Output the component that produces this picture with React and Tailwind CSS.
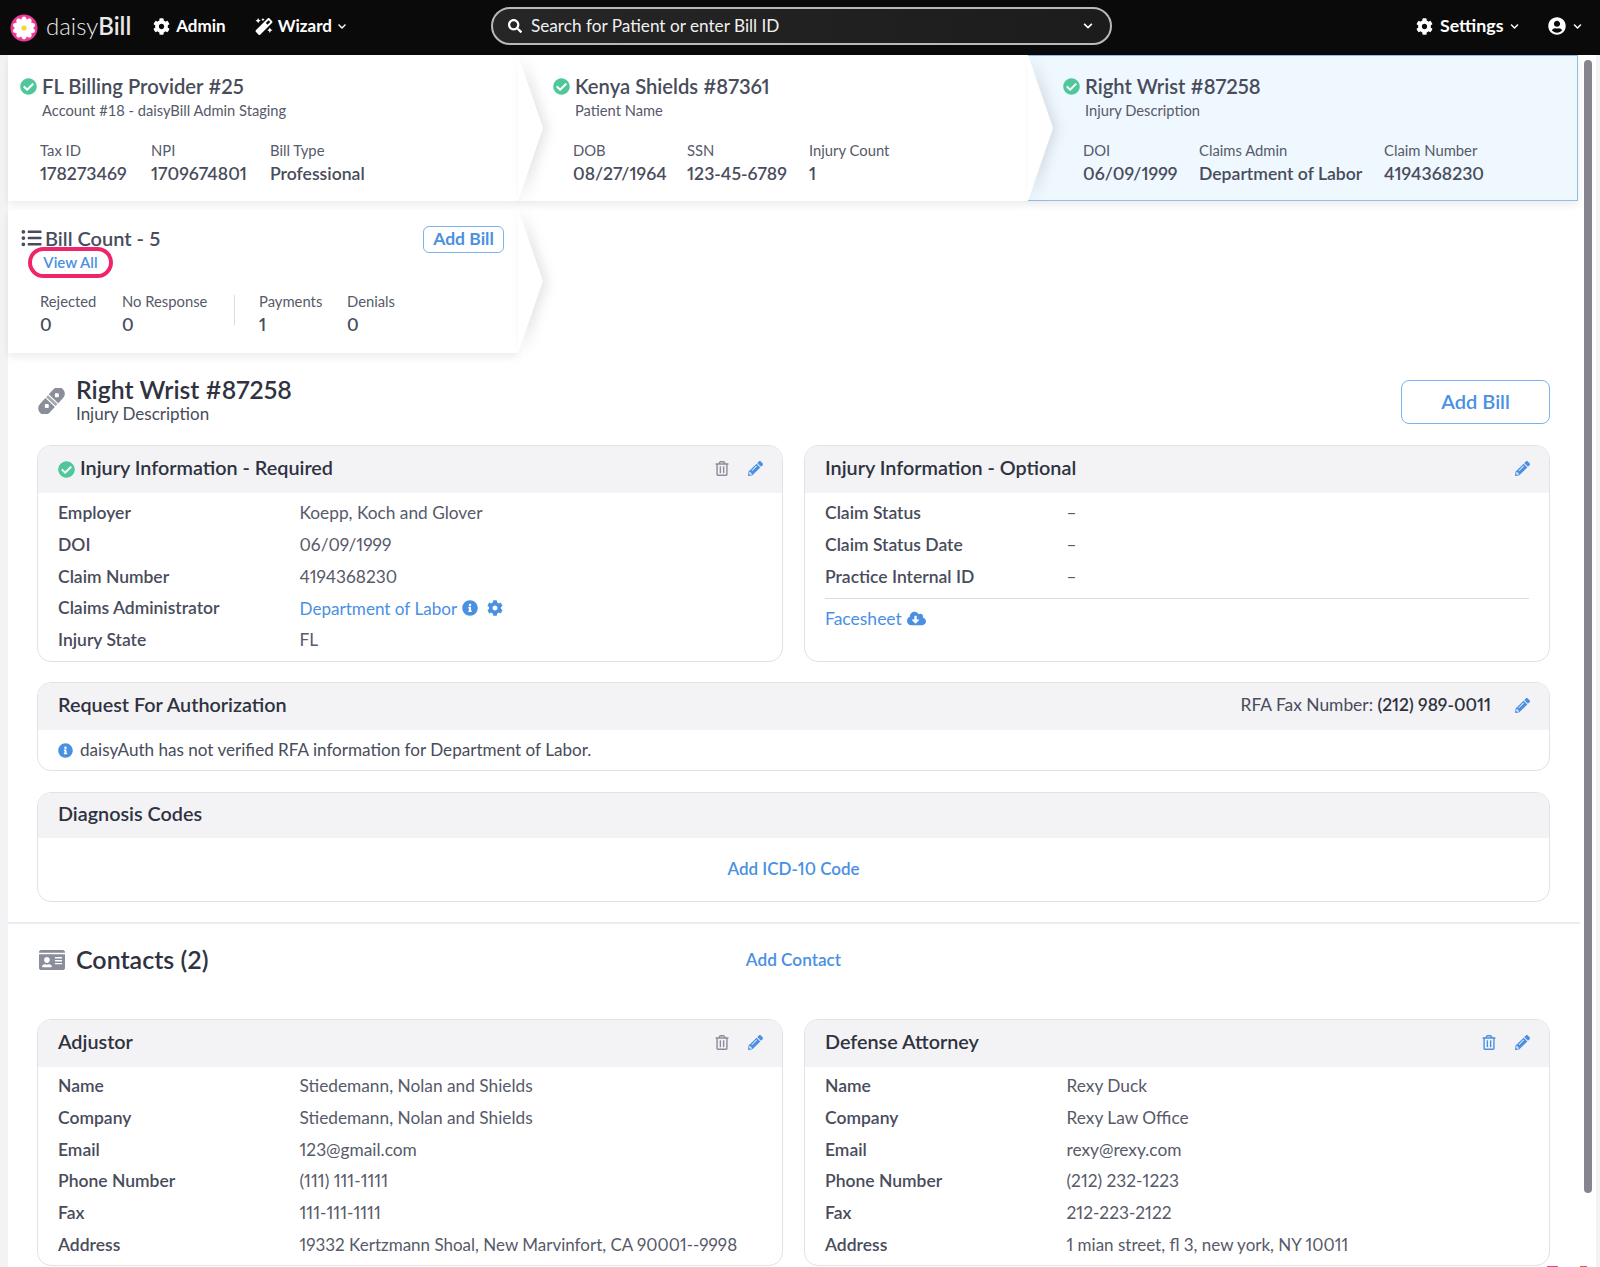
import React from "react";
import {
  FaCheckCircle,
  FaChevronDown,
  FaCloudDownloadAlt,
  FaCog,
  FaIdCard,
  FaInfoCircle,
  FaListUl,
  FaMagic,
  FaPencilAlt,
  FaRegTrashAlt,
  FaSearch,
  FaUserCircle,
} from "react-icons/fa";

const petals = [0, 36, 72, 108, 144, 180, 216, 252, 288, 324];

function Logo() {
  return (
    <svg width="28" height="28" viewBox="0 0 28 28">
      <circle cx="14" cy="14" r="13.5" fill="#ee3a95" />
      {petals.map((a) => (
        <ellipse key={a} cx="14" cy="7.5" rx="3" ry="5" fill="#fff" transform={`rotate(${a} 14 14)`} />
      ))}
      <circle cx="14" cy="14" r="2.6" fill="#f7d530" />
    </svg>
  );
}

function BandAid() {
  return (
    <svg width="27" height="26" viewBox="0 0 27 26" className="ml-[1px] -mt-[3px] shrink-0">
      <g transform="rotate(-47 13.5 13)">
        <path d="M3.5 6.5h8v13h-8a6.5 6.5 0 0 1-6.5-6.5v0a6.5 6.5 0 0 1 6.5-6.5z" fill="#8a8d9a" />
        <rect x="12.6" y="6.5" width="2.8" height="13" fill="#a4a6b0" />
        <path d="M16.5 6.5h7a6.5 6.5 0 0 1 6.5 6.5v0a6.5 6.5 0 0 1-6.5 6.5h-7z" fill="#8a8d9a" />
        <rect x="4.6" y="11" width="4" height="4" rx="1" fill="#fff" transform="rotate(45 6.6 13)" />
        <rect x="19.4" y="11" width="4" height="4" rx="1" fill="#fff" transform="rotate(45 21.4 13)" />
      </g>
    </svg>
  );
}

function Chevron() {
  return (
    <div className="absolute top-0 right-[-25px] h-full w-[25px] [filter:drop-shadow(5px_1px_6px_rgba(0,0,0,0.1))]">
      <div className="h-full w-full bg-white [clip-path:polygon(0_0,100%_50%,0_100%)]"></div>
    </div>
  );
}

function Stat({ label, value, className }) {
  return (
    <div className={className}>
      <div className="text-[14.8px] leading-5 text-[#565a69]">{label}</div>
      <div className="mt-[2px] text-[17.6px] leading-6 font-semibold text-[#484c5b] proportional-nums">{value}</div>
    </div>
  );
}

function Crumb({ title, sub, stats, top, className, chevron }) {
  return (
    <div className={className}>
      <div className={`-ml-[20px] flex items-center ${top}`}>
        <FaCheckCircle className="mr-[5px] h-[17px] w-[17px] text-[#4fc79a]" />
        <span className="text-[20.2px] leading-6 font-semibold text-[#484c5b] proportional-nums">{title}</span>
      </div>
      <div className="mt-[2px] ml-[2px] text-[14.7px] leading-5 text-[#565a69]">{sub}</div>
      <div className="mt-[20px] flex">{stats}</div>
      {chevron && <Chevron />}
    </div>
  );
}

function Row({ label, children, valueClass = "text-[17.3px]" }) {
  return (
    <div className="flex h-[31.7px] items-center text-[17.5px] proportional-nums">
      <div className="w-[241.5px] shrink-0 font-semibold text-[#484c5b]">{label}</div>
      <div className={`flex items-center text-[#565a69] ${valueClass}`}>{children}</div>
    </div>
  );
}

function CardHead({ title, check, trash, trashBlue, children }) {
  return (
    <div className="flex h-[47px] items-center rounded-t-[13px] bg-[#f3f3f6] pr-[19px] pl-[20px]">
      {check && <FaCheckCircle className="mr-[5px] h-[17px] w-[17px] text-[#4fc79a]" />}
      <div className="mb-[3px] flex-1 text-[19.8px] font-semibold text-[#2f3240]">{title}</div>
      {children}
      {trash && (
        <FaRegTrashAlt className={`mr-[19px] mb-[2px] h-[15px] w-[14px] ${trashBlue ? "text-[#4a90e2]" : "text-[#8a8d9a]"}`} />
      )}
      <FaPencilAlt className="mb-[2px] h-[15px] w-[15px] text-[#4a90e2]" />
    </div>
  );
}

function Card({ className, children }) {
  return (
    <div className={`rounded-[14px] border border-[#e2e2e6] bg-white ${className}`}>{children}</div>
  );
}

export default function App() {
  return (
    <div className="relative h-[1267px] w-[1600px] overflow-hidden bg-[#f3f3f6] [font-family:Lato,sans-serif]">
      <header className="flex h-[55px] items-center bg-[#0a0a0a] pb-[3px] text-white">
        <div className="ml-[10px] mt-[3px]">
          <Logo />
        </div>
        <div className="ml-[8px] text-[24px] leading-none text-[#e8e8e8]">
          <span className="font-light">daisy</span>
          <span className="font-semibold">Bill</span>
        </div>
        <FaCog className="ml-[22px] h-[17px] w-[17px]" />
        <span className="ml-[6px] text-[17px] font-bold">Admin</span>
        <FaMagic className="ml-[29px] h-[17px] w-[18px]" />
        <span className="ml-[5px] text-[17px] font-bold">Wizard</span>
        <FaChevronDown className="ml-[4px] h-[9px] w-[12px]" />
        <div className="ml-[143px] flex h-[38px] w-[621px] items-center rounded-full border-2 border-[#b9b9b9] bg-gradient-to-r from-[#262626] to-[#1c1c1c] pr-[16px] pl-[15px]">
          <FaSearch className="h-[14px] w-[14px]" />
          <span className="ml-[9px] flex-1 text-[17.2px] text-[#f0f0f0]">Search for Patient or enter Bill ID</span>
          <FaChevronDown className="h-[10px] w-[12px]" />
        </div>
        <FaCog className="ml-[304px] h-[17px] w-[17px]" />
        <span className="ml-[7px] mb-[1px] text-[17.8px] font-bold">Settings</span>
        <FaChevronDown className="ml-[5px] h-[9px] w-[11px]" />
        <FaUserCircle className="ml-[28px] h-[18px] w-[18px]" />
        <FaChevronDown className="ml-[6px] h-[9px] w-[11px]" />
      </header>

      <main className="mr-[4px] ml-[8px] h-[1212px] bg-white">
        <div className="flex w-[1570px]">
          <Crumb
            className="relative z-20 h-[146px] w-[510px] bg-white pl-[32px] shadow-[0_4px_8px_rgba(0,0,0,0.08)]"
            top="pt-[19px]"
            title="FL Billing Provider #25"
            sub="Account #18 - daisyBill Admin Staging"
            chevron
            stats={
              <>
                <Stat className="w-[111px]" label="Tax ID" value="178273469" />
                <Stat className="w-[119px]" label="NPI" value="1709674801" />
                <Stat label="Bill Type" value="Professional" />
              </>
            }
          />
          <Crumb
            className="relative z-10 h-[146px] w-[510px] bg-white pl-[55px] shadow-[0_4px_8px_rgba(0,0,0,0.08)]"
            top="pt-[19px]"
            title="Kenya Shields #87361"
            sub="Patient Name"
            chevron
            stats={
              <>
                <Stat className="w-[114px]" label="DOB" value="08/27/1964" />
                <Stat className="w-[122px]" label="SSN" value="123-45-6789" />
                <Stat label="Injury Count" value="1" />
              </>
            }
          />
          <Crumb
            className="relative h-[146px] w-[550px] border-t border-r border-b border-[#8fbcf2] bg-[#eff7ff] pl-[55px] shadow-[0_4px_8px_rgba(0,0,0,0.08)]"
            top="pt-[18px]"
            title="Right Wrist #87258"
            sub="Injury Description"
            stats={
              <>
                <Stat className="w-[116px]" label="DOI" value="06/09/1999" />
                <Stat className="w-[185px]" label="Claims Admin" value="Department of Labor" />
                <Stat label="Claim Number" value="4194368230" />
              </>
            }
          />
        </div>

        <div className="relative mt-[8px] h-[144px] w-[510px] bg-white pr-[14px] pl-[32px] shadow-[0_4px_8px_rgba(0,0,0,0.08)]">
          <div className="flex items-start">
            <div>
              <div className="-ml-[19px] flex items-center pt-[17px]">
                <FaListUl className="mr-[3px] h-[20px] w-[21px] text-[#484c5b]" />
                <span className="text-[20px] leading-6 font-semibold text-[#484c5b]">Bill Count - 5</span>
              </div>
              <div className="-ml-[12px] mt-[-3px] flex h-[31px] w-[85px] items-center justify-center rounded-full border-4 border-[#f0246a] text-[15px] font-semibold text-[#4a90e2]">
                View All
              </div>
            </div>
            <div className="mt-[17px] ml-auto flex h-[27px] w-[81px] items-center justify-center rounded-[6px] border border-[#7eb2ee] pb-[1px] text-[17.5px] font-bold text-[#4a90e2]">
              Add Bill
            </div>
          </div>
          <div className="mt-[13px] flex">
            <Stat className="w-[82px]" label="Rejected" value="0" />
            <Stat className="w-[112px]" label="No Response" value="0" />
            <div className="mt-[4px] mr-[24px] h-[30px] w-px bg-[#dcdce0]"></div>
            <Stat className="w-[88px]" label="Payments" value="1" />
            <Stat label="Denials" value="0" />
          </div>
          <Chevron />
        </div>

        <div className="ml-[29px] w-[1513px]">
          <div className="mt-[27px] flex h-[44px] items-center">
            <BandAid />
            <div className="-mt-[4px] ml-[11px]">
              <div className="text-[24.8px] leading-[28px] font-semibold text-[#2f3240] proportional-nums">Right Wrist #87258</div>
              <div className="text-[17px] leading-[20px] text-[#484c5b]">Injury Description</div>
            </div>
            <div className="ml-auto flex h-[44px] w-[149px] items-center justify-center rounded-[8px] border border-[#7eb2ee] pb-[3px] text-[20px] font-semibold text-[#4a90e2]">
              Add Bill
            </div>
          </div>

          <div className="mt-[21px] grid grid-cols-[746px_1fr] gap-[21px]">
            <Card className="h-[217px]">
              <CardHead title="Injury Information - Required" check trash />
              <div className="px-[20px] pt-[4.5px]">
                <Row label="Employer">Koepp, Koch and Glover</Row>
                <Row label="DOI">06/09/1999</Row>
                <Row label="Claim Number">4194368230</Row>
                <Row label="Claims Administrator">
                  <span className="text-[17.1px] text-[#4a90e2]">Department of Labor</span>
                  <FaInfoCircle className="ml-[5px] h-[16px] w-[16px] text-[#4a90e2]" />
                  <FaCog className="ml-[9px] h-[16px] w-[16px] text-[#4a90e2]" />
                </Row>
                <Row label="Injury State">FL</Row>
              </div>
            </Card>
            <Card className="h-[217px]">
              <CardHead title="Injury Information - Optional" />
              <div className="px-[20px] pt-[4.5px]">
                <Row label="Claim Status">–</Row>
                <Row label="Claim Status Date">–</Row>
                <Row label="Practice Internal ID">–</Row>
                <div className="mt-[5px] border-t border-[#dcdce0] pt-[7px]">
                  <div className="flex items-center text-[17.5px] text-[#4a90e2]">
                    Facesheet
                    <FaCloudDownloadAlt className="ml-[5px] h-[19px] w-[19px]" />
                  </div>
                </div>
              </div>
            </Card>
          </div>

          <Card className="mt-[20px] h-[89px]">
            <CardHead title="Request For Authorization">
              <span className="mr-[24px] mb-[2px] text-[17.4px] text-[#484c5b] proportional-nums">
                RFA Fax Number: <span className="font-semibold text-[#2f3240]">(212) 989-0011</span>
              </span>
            </CardHead>
            <div className="flex h-[40px] items-center pl-[20px] text-[17.1px] text-[#484c5b]">
              <FaInfoCircle className="mr-[7px] h-[15px] w-[15px] text-[#4a90e2]" />
              daisyAuth has not verified RFA information for Department of Labor.
            </div>
          </Card>

          <Card className="mt-[21px] h-[110px]">
            <div className="flex h-[45px] items-center rounded-t-[13px] bg-[#f3f3f6] pb-[3px] pl-[20px] text-[19.8px] font-semibold text-[#2f3240]">
              Diagnosis Codes
            </div>
            <div className="flex h-[62px] items-center justify-center pb-[1px] text-[17px] font-semibold text-[#4a90e2] proportional-nums">
              Add ICD-10 Code
            </div>
          </Card>
        </div>

        <div className="mt-[20px] w-[1572px] border-t-2 border-[#ececef]"></div>

        <div className="ml-[29px] w-[1513px]">
          <div className="relative mt-[21px] flex h-[30px] items-center justify-center">
            <div className="absolute left-0 flex items-center">
              <FaIdCard className="ml-[2px] h-[24px] w-[26px] text-[#8a8d9a]" />
              <span className="ml-[11px] text-[25px] font-semibold text-[#2f3240]">Contacts (2)</span>
            </div>
            <span className="text-[17.2px] font-semibold text-[#4a90e2]">Add Contact</span>
          </div>

          <div className="mt-[44px] grid grid-cols-[746px_1fr] gap-[21px]">
            <Card className="h-[247px]">
              <CardHead title="Adjustor" trash />
              <div className="px-[20px] pt-[3.5px]">
                <Row label="Name">Stiedemann, Nolan and Shields</Row>
                <Row label="Company">Stiedemann, Nolan and Shields</Row>
                <Row label="Email">123@gmail.com</Row>
                <Row label="Phone Number">(111) 111-1111</Row>
                <Row label="Fax">111-111-1111</Row>
                <Row label="Address" valueClass="text-[17px]">19332 Kertzmann Shoal, New Marvinfort, CA 90001--9998</Row>
              </div>
            </Card>
            <Card className="h-[247px]">
              <CardHead title="Defense Attorney" trash trashBlue />
              <div className="px-[20px] pt-[3.5px]">
                <Row label="Name">Rexy Duck</Row>
                <Row label="Company">Rexy Law Office</Row>
                <Row label="Email">rexy@rexy.com</Row>
                <Row label="Phone Number">(212) 232-1223</Row>
                <Row label="Fax">212-223-2122</Row>
                <Row label="Address" valueClass="text-[17px]">1 mian street, fl 3, new york, NY 10011</Row>
              </div>
            </Card>
          </div>
        </div>
      </main>

      {/* scrollbar thumb */}
      <div className="absolute top-[60px] left-[1584px] h-[1133px] w-[8px] rounded-full bg-[#85858f]"></div>
      {/* floating button cropped by the bottom of the page */}
      <div className="absolute top-[1266px] left-[1547px] h-px w-[11px] bg-[#ee3a95]"></div>
      <div className="absolute top-[1266px] left-[1580px] h-px w-[7px] bg-[#f0504a]"></div>
    </div>
  );
}
